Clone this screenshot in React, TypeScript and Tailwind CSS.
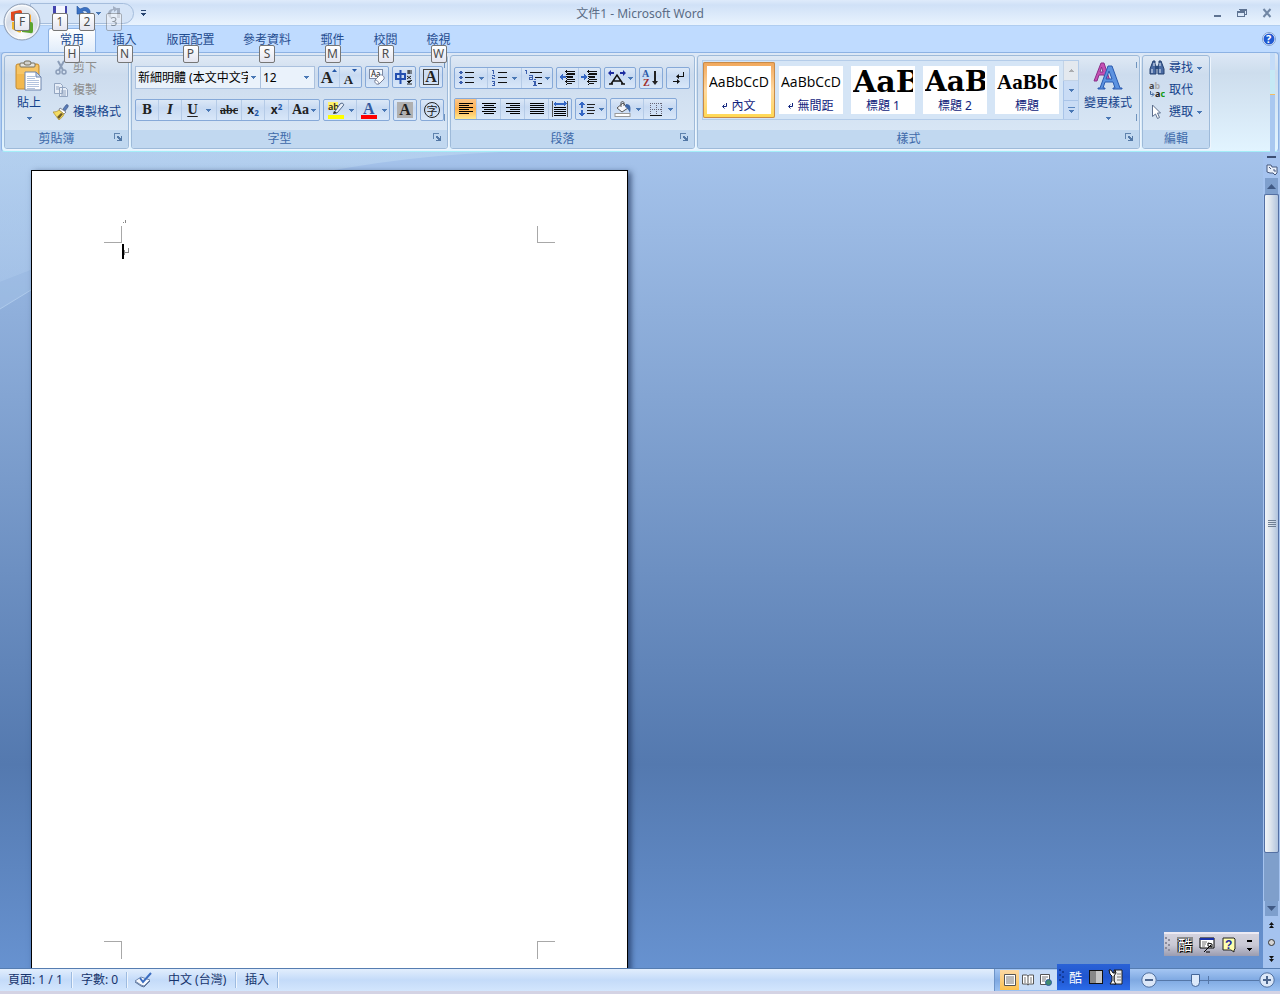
import { useState } from 'react'
import type { ReactNode } from 'react'
import clsx from 'clsx'

const tabs = [
  { label: '常用', tip: 'H', width: 'w-[48px]' },
  { label: '插入', tip: 'N', width: 'w-[57px]' },
  { label: '版面配置', tip: 'P', width: 'w-[75px]' },
  { label: '參考資料', tip: 'S', width: 'w-[78px]' },
  { label: '郵件', tip: 'M', width: 'w-[53px]' },
  { label: '校閱', tip: 'R', width: 'w-[53px]' },
  { label: '檢視', tip: 'W', width: 'w-[53px]' },
]

const styleItems = [
  { name: '內文', mark: true, sample: 'AaBbCcD', font: 'font-["Open_Sans"] text-[14px]' },
  { name: '無間距', mark: true, sample: 'AaBbCcD', font: 'font-["Open_Sans"] text-[14px]' },
  { name: '標題 1', mark: false, sample: 'AaB', font: 'font-["DejaVu_Serif"] text-[30px] font-bold' },
  { name: '標題 2', mark: false, sample: 'AaB', font: 'font-["DejaVu_Serif"] text-[28px] font-bold' },
  { name: '標題', mark: false, sample: 'AaBbC', font: 'font-["Liberation_Serif"] text-[21px] font-bold' },
]

function Arrow({ className }: { className?: string }) {
  return (
    <svg className={clsx('h-[3px] w-[5px] shrink-0', className)} viewBox="0 0 5 3" shapeRendering="crispEdges">
      <path d="M0 0h5v1H4v1H3v1H2V2H1V1H0z" fill="#4a78b5" />
    </svg>
  )
}

function KeyTip({ children, faded, className }: { children: ReactNode; faded?: boolean; className?: string }) {
  return (
    <kbd
      className={clsx(
        'absolute z-20 flex h-[18px] w-4 items-center justify-center rounded-xs border border-[#767676] bg-linear-to-b from-white to-[#e4e5f0] font-["Noto_Sans"] text-xs leading-none text-[#4c4c4c]',
        faded && 'opacity-50',
        className,
      )}
    >
      {children}
    </kbd>
  )
}

function Group({ title, launcher = true, className, children }: { title: string; launcher?: boolean; className?: string; children: ReactNode }) {
  return (
    <section
      className={clsx(
        'relative flex h-[94px] shrink-0 flex-col rounded-[3px] border border-[#9ebad9] bg-linear-to-b from-[#dfe9f5] via-[#cddcee] via-20% to-[#dbe9f7] shadow-[1px_1px_0_#eef5fd]',
        className,
      )}
    >
      <div className="flex-1">{children}</div>
      <div className={clsx('relative flex h-[18px] items-center justify-center rounded-b-[2px] bg-[#c1d8f0]', launcher && 'pr-5')}>
        <h2 className="text-xs leading-none text-[#3e6aaa]">{title}</h2>
        {launcher && (
          <button aria-label={`${title}選項`} className="absolute right-[6px] top-[3px] h-2 w-2">
            <svg viewBox="0 0 8 8" className="h-2 w-2" shapeRendering="crispEdges">
              <path d="M0 0h6v1H1v5H0z" fill="#5f83ae" />
              <path d="M3 3h2v1h1v1h1V3h1v5H3V7h2V6H4V5H3z" fill="#5378a6" />
            </svg>
          </button>
        )}
      </div>
    </section>
  )
}

function EdgeMarks() {
  return (
    <>
      <span className="absolute right-[2px] top-[6px] h-[6px] w-px bg-[#6f93bd]" />
      <span className="absolute right-[2px] top-[58px] h-[7px] w-px bg-[#6f93bd]" />
    </>
  )
}

function Cluster({ children }: { children: ReactNode }) {
  return (
    <div className="flex h-[22px] divide-x divide-[#b5cbe7] rounded-xs border border-[#86a9d8] bg-linear-to-b from-[#dce8f7] via-[#c8daf2] via-40% to-[#d8e7f9]">
      {children}
    </div>
  )
}

function Tool({ label, arrow, active, className, children }: { label: string; arrow?: boolean; active?: boolean; className: string; children: ReactNode }) {
  return (
    <button
      aria-label={label}
      className={clsx(
        'flex h-5 items-center justify-center gap-1 leading-none text-[#222] [&_svg]:shrink-0',
        active && 'bg-linear-to-b from-[#fbc485] via-[#fdb14f] to-[#ffe98f]',
        className,
      )}
    >
      {children}
      {arrow && <Arrow />}
    </button>
  )
}

function Lines({ rows }: { rows: [number, number][] }) {
  return (
    <svg className="h-3 w-4 shrink-0" viewBox="0 0 16 12" shapeRendering="crispEdges">
      {rows.map(([x, w], i) => (
        <rect key={i} x={x} y={i * 2} width={w} height="1" fill="#000" />
      ))}
    </svg>
  )
}

const alignLeft: [number, number][] = [[1, 14], [1, 10], [1, 14], [1, 10], [1, 14], [1, 10]]
const alignCenter: [number, number][] = [[1, 14], [3, 10], [1, 14], [3, 10], [1, 14], [3, 10]]
const alignRight: [number, number][] = [[1, 14], [5, 10], [1, 14], [5, 10], [1, 14], [5, 10]]
const alignFull: [number, number][] = [[1, 14], [1, 14], [1, 14], [1, 14], [1, 14], [1, 14]]

function ListIcon({ numbered }: { numbered?: boolean }) {
  return (
    <svg className="h-4 w-4" viewBox="0 0 16 16" shapeRendering="crispEdges">
      {[2, 7, 12].map((y) => (
        <rect key={y} x="6" y={y} width="9" height="1" fill="#111" />
      ))}
      {numbered ? (
        <path d="M0 0h2v4H1V1H0zM0 5h3v2H1v1h2v1H0V7h2V6H0zM0 11h3v5H0v-1h2v-1H1v-1h1v-1H0z" fill="#3b5fae" />
      ) : (
        <path d="M1 1h2v3H1zM1 6h2v3H1zM1 11h2v3H1zM0 2h4v1H0zM0 7h4v1H0zM0 12h4v1H0z" fill="#3b5fae" />
      )}
    </svg>
  )
}

function MultiListIcon() {
  return (
    <svg className="h-4 w-[18px]" viewBox="0 0 18 16" shapeRendering="crispEdges">
      <path d="M5 2h12v1H5zM10 7h7v1h-7zM13 13h4v1h-4z" fill="#111" />
      <path d="M0 0h2v4H1V1H0zM4 5h4v5H4V7h3V6H4zM9 9h2v1H9zM8 11h3v4h1v1H8v-1h1v-3H8z" fill="#3b5fae" />
      <path d="M5 8h2v1H5z" fill="#d3e1f5" />
    </svg>
  )
}

function IndentIcon({ right }: { right?: boolean }) {
  return (
    <svg className="h-4 w-[18px]" viewBox="0 0 18 16" shapeRendering="crispEdges">
      <path d="M6 1h10v1H6zM8 3h8v2H8zM8 6h6v2H8zM8 9h8v1H8zM6 11h10v1H6zM8 13h5v1H8z" fill="#111" />
      <path d="M7.500 0v16" stroke="#111" strokeDasharray="1 1" />
      {right ? <path d="M0 6h3V4l4 3-4 3V8H0z" fill="#3567c4" /> : <path d="M7 6H4V4L0 7l4 3V8h3z" fill="#3567c4" />}
    </svg>
  )
}

function DistributeIcon() {
  return (
    <svg className="h-4 w-4" viewBox="0 0 16 16" shapeRendering="crispEdges">
      <path d="M0 0h1v16H0zM15 0h1v16h-1z" fill="#555" />
      <path d="M2 6h12v1H2zM2 8h12v1H2zM2 10h12v1H2zM2 12h12v1H2zM2 14h12v1H2z" fill="#000" />
      <path d="M1 3l3-3v2h8V0l3 3-3 2V4H4v1z" fill="#3567c4" />
    </svg>
  )
}

function AsianLayoutIcon() {
  return (
    <svg className="h-4 w-[18px]" viewBox="0 0 18 16">
      <path d="M3 14L9 5l6 9M5 11h8M1 14h4M13 14h4" fill="none" stroke="#111" strokeWidth="1.500" />
      <path d="M0 3l3-3v2h3v2H3v2zM18 3l-3-3v2h-3v2h3v2z" fill="#1d2da0" />
    </svg>
  )
}

function SortIcon() {
  return (
    <svg className="h-[18px] w-[18px]" viewBox="0 0 18 18">
      <text x="0" y="8" fontSize="10" fontWeight="bold" fontFamily="Liberation Serif" fill="#2c5aa8">A</text>
      <text x="1" y="17" fontSize="10" fontWeight="bold" fontFamily="Liberation Serif" fill="#a02c2c">Z</text>
      <path d="M12 2h2v10h2l-3 4-3-4h2z" fill="#222" />
    </svg>
  )
}

function MarksIcon() {
  return (
    <svg className="h-4 w-4" viewBox="0 0 16 16">
      <path d="M13 2v4H9V4L6 6.500 9 9V7h5V2zM3 11h4V9l3 2.500L7 14v-2H3z" fill="#111" />
    </svg>
  )
}

function SpacingIcon() {
  return (
    <svg className="h-4 w-4" viewBox="0 0 16 16" shapeRendering="crispEdges">
      <path d="M3 0l3 4H4v3H2V4H0zM3 16l3-4H4V9H2v3H0z" fill="#3567c4" />
      <path d="M8 3h8v1H8zM8 6h7v1H8zM8 9h8v1H8zM8 12h7v1H8z" fill="#222" />
    </svg>
  )
}

function BucketIcon() {
  return (
    <svg className="h-4 w-[18px]" viewBox="0 0 18 16">
      <rect x="1" y="12.500" width="15" height="3" fill="#fff" stroke="#999" />
      <path d="M3 7l6-5 5 5-6 4z" fill="#f5f7fb" stroke="#555" />
      <path d="M7 6V2c0-2 3-2 3 0v3" fill="none" stroke="#555" />
      <path d="M12 3c5 0 5 4 4 9-1-2-2-5-5-6z" fill="#3f68a8" />
    </svg>
  )
}

function BorderIcon() {
  return (
    <svg className="h-4 w-4" viewBox="0 0 16 16" shapeRendering="crispEdges">
      <path d="M2 2.500h12M2 8.500h12M2.500 2v12M8.500 2v12M13.500 2v12" stroke="#667" strokeDasharray="1 1" />
      <path d="M2 14h12v1H2z" fill="#111" />
    </svg>
  )
}

function EraserIcon() {
  return (
    <svg className="h-[18px] w-[18px]" viewBox="0 0 18 18">
      <rect x="1.500" y="1.500" width="13" height="9" fill="#f8faff" stroke="#7d8ba5" />
      <text x="3" y="9" fontSize="8" fontFamily="Noto Sans" fill="#222">Aa</text>
      <path d="M7 12l5-5c2-1 5 2 4 4l-5 5c-3 1-5-2-4-4z" fill="#fff" stroke="#77809a" />
      <path d="M7 12c2 0 4 2 4 4" fill="none" stroke="#77809a" />
    </svg>
  )
}

function PhoneticIcon() {
  return (
    <svg className="h-[18px] w-[18px]" viewBox="0 0 18 18">
      <path d="M1 6h9v5H1zM5.500 2v14" fill="none" stroke="#234fb0" strokeWidth="2" />
      <path d="M12 3h5M12 5h5M14 2v4M12 8l4 3M16 8l-4 3M12 13l2 2 3-3M12 16h5" stroke="#222" />
    </svg>
  )
}

function HighlightIcon() {
  return (
    <svg className="h-[18px] w-[18px]" viewBox="0 0 18 18">
      <rect x="1" y="1" width="10" height="8" fill="#fff36b" />
      <text x="1" y="9" fontSize="9" fontFamily="Noto Sans" fontWeight="600" fill="#222">ab</text>
      <path d="M7 12l6-9c2-2 5 0 3 2l-6 7z" fill="#e8eef8" stroke="#526a8c" />
      <path d="M6 13l1-3 3 2z" fill="#333" />
      <rect x="1" y="14" width="16" height="4" fill="#ff0" />
    </svg>
  )
}

function FontColorIcon() {
  return (
    <svg className="h-[18px] w-[18px]" viewBox="0 0 18 18">
      <text x="3" y="13" fontSize="16" fontWeight="bold" fontFamily="Liberation Serif" fill="#345a9e">A</text>
      <rect x="1" y="14" width="16" height="4" fill="#f00" />
    </svg>
  )
}

function PasteIcon() {
  return (
    <svg className="h-8 w-7" viewBox="0 0 28 32">
      <rect x="1" y="4" width="23" height="25" rx="2" fill="#f2b84e" stroke="#c58c33" />
      <path d="M2 5h21v9H2z" fill="#f8cd77" opacity=".6" />
      <rect x="5" y="3" width="15" height="4" rx="1" fill="#e4e4e0" stroke="#77705d" />
      <rect x="9" y="1" width="7" height="4" rx="2" fill="#d0d0cc" stroke="#77705d" />
      <path d="M10 12h11l5 5v13H10z" fill="#fff" stroke="#6f86ad" />
      <path d="M21 12v5h5z" fill="#cfdcf0" stroke="#6f86ad" />
      <path d="M12 16h8M12 18h8M12 20h12M12 22h12M12 24h12M12 26h12M12 28h8" stroke="#b3c4de" shapeRendering="crispEdges" />
    </svg>
  )
}

function ScissorsIcon() {
  return (
    <svg className="h-4 w-4" viewBox="0 0 16 16" fill="none" stroke="#8b9db8" strokeWidth="2">
      <path d="M5 1l5 9M11 1L6 10" />
      <circle cx="5" cy="12" r="2" strokeWidth="1.500" />
      <circle cx="11" cy="12" r="2" strokeWidth="1.500" />
    </svg>
  )
}

function CopyIcon() {
  return (
    <svg className="h-4 w-4" viewBox="0 0 16 16" fill="#e6edf7" stroke="#93a5c0">
      <path d="M1.500 1.500h6l2 2v8h-8zM6.500 5.500h6l2 2v7h-8z" />
      <path d="M3 5h3M3 7h3M8 9h5M8 11h5M8 13h5" />
    </svg>
  )
}

function BrushIcon() {
  return (
    <svg className="h-4 w-4" viewBox="0 0 16 16">
      <path d="M10 5l3-4c1-1 3 0 2 2l-3 4z" fill="#587bb8" stroke="#384f7c" strokeWidth=".6" />
      <path d="M7 4l6 4-2 2-5-4z" fill="#fff" stroke="#6b7080" strokeWidth=".8" />
      <path d="M6 6l5 4c-1 3-3 4-5 6L0 8c3 0 5-1 6-2z" fill="#f4dc62" stroke="#ab8b2a" strokeWidth=".7" />
      <path d="M4 13l4-4 2 1-4 5z" fill="#6b5a2a" />
    </svg>
  )
}

function FindIcon() {
  return (
    <svg className="h-4 w-4" viewBox="0 0 16 16">
      <path d="M4 1h2v3l1 2v8H1V9zM10 1h2l3 8v5H9V6l1-2z" fill="#4a6ba3" stroke="#24406f" />
      <path d="M3 9v4M11 9v4M5 3v3M11 3v3" stroke="#e8f0fc" />
      <path d="M6 6h4v3H6z" fill="#294a7e" />
    </svg>
  )
}

function ReplaceIcon() {
  return (
    <svg className="h-4 w-4" viewBox="0 0 16 16" fontFamily="Noto Sans" fontWeight="bold">
      <text x="0" y="7" fontSize="9" fill="#444">a<tspan fill="#aaa">b</tspan></text>
      <text x="6" y="15" fontSize="9" fill="#222">a<tspan fill="#169a16">c</tspan></text>
      <path d="M1.500 9v3.500h3M3 10.500l2 2-2 2" fill="none" stroke="#446aa0" />
    </svg>
  )
}

function PointerIcon() {
  return (
    <svg className="h-4 w-4" viewBox="0 0 16 16">
      <path d="M3.500 1l8 8H8.500l2 4.500-2 1L6.500 10 3.500 12.500z" fill="#fff" stroke="#5d6f8d" />
    </svg>
  )
}

function ChangeStylesIcon() {
  return (
    <svg className="h-7 w-8" viewBox="0 0 32 28">
      <path d="M2 19L9 1h3l6 18h-4l-2-6H7l-2 6zM8 10h3l-1.500-5z" fill="#c450b4" stroke="#8a3087" />
      <path d="M8 26l8-22h4l8 22h2v1h-9v-1h2l-2-6h-8l-2 6h2v1H6v-1zM14 17h6l-3-8z" fill="#5c92e0" stroke="#2a5bb0" />
    </svg>
  )
}

function OfficeLogo() {
  return (
    <svg className="h-[38px] w-[38px]" viewBox="0 0 38 38">
      <defs>
        <radialGradient id="orb" cx=".5" cy=".85" r=".9">
          <stop offset="0" stopColor="#fff" />
          <stop offset=".55" stopColor="#d4dbe6" />
          <stop offset="1" stopColor="#f7f9fc" />
        </radialGradient>
      </defs>
      <circle cx="19" cy="19" r="18" fill="url(#orb)" stroke="#8c9cb3" />
      <circle cx="19" cy="19" r="16.500" fill="none" stroke="#fff" opacity=".8" />
      <path d="M8 9l9-2q2 0 2 2v9H10q-2 0-2-2z" fill="#e2481e" />
      <path d="M19 12l7-1q2 0 2 2v6h-9z" fill="#f5a52a" />
      <path d="M9 19h9v10q-1 1-3 0l-6-3z" fill="#f0b52c" />
      <path d="M19 19h9q2 0 2 2v7q0 3-3 2l-8-1z" fill="#5ba42f" />
      <path d="M12 12h4v4h-4z" fill="#fff" opacity=".8" />
    </svg>
  )
}

function TitleBar() {
  return (
    <header className="relative flex h-[26px] shrink-0 items-center justify-center border-b border-[#b0cdf0] bg-linear-to-b from-[#dfebfb] via-[#d0e1f7] via-20% to-[#e9f3fe]">
      <div className="absolute left-[30px] top-[3px] flex h-[21px] w-[104px] items-start gap-2 rounded-r-full border border-[#a5bddc] bg-[#d5e4f7] pl-[21px] pt-px">
        <button aria-label="儲存檔案">
          <svg className="h-4 w-4" viewBox="0 0 16 16">
            <path d="M1 1h14v14H1z" fill="#4344ae" />
            <path d="M4 1h9v8H4z" fill="#f4f6ff" />
            <path d="M4 11h8v4H4z" fill="#c9cdef" />
          </svg>
        </button>
        <button aria-label="復原" className="flex items-center gap-1">
          <svg className="h-4 w-4" viewBox="0 0 16 16">
            <path d="M1 1v8h8L6 6.500c3-2 6 0 6 4l-1 3c5-4 4-12-3-11L4 4z" fill="#3b72c4" stroke="#24509a" strokeWidth=".6" />
          </svg>
          <Arrow />
        </button>
        <button aria-label="取消復原" className="-ml-1">
          <svg className="h-4 w-4" viewBox="0 0 16 16">
            <path d="M8 1l5 3-4 3V5C6 5 5 9 7 14 1 12 2 4 8 4zM12 3h3v10h-3z" fill="#a3b0c4" />
          </svg>
        </button>
      </div>
      <button aria-label="自訂快速存取工具列" className="absolute left-[141px] top-[10px]">
        <svg className="block h-[6px] w-[5px]" viewBox="0 0 5 6" shapeRendering="crispEdges">
          <path d="M0 0h5v1H0zM0 3h5v1H4v1H3v1H2V5H1V4H0z" fill="#27446f" />
        </svg>
      </button>
      <KeyTip className="left-[52px] top-[13px]">1</KeyTip>
      <KeyTip className="left-[79px] top-[13px]">2</KeyTip>
      <KeyTip faded className="left-[106px] top-[13px]">3</KeyTip>
      <h1 className="pt-[3px] text-xs leading-none text-[#5a6c85]">文件1 - Microsoft Word</h1>
      <div className="absolute right-2 top-2 flex items-center gap-[15px]">
        <button aria-label="最小化">
          <svg className="block h-[10px] w-[10px]" viewBox="0 0 10 10" shapeRendering="crispEdges"><path d="M2 7h7v2H2z" fill="#5e7392" /></svg>
        </button>
        <button aria-label="還原">
          <svg className="block h-[10px] w-[10px]" viewBox="0 0 10 10" shapeRendering="crispEdges">
            <path d="M2 1h8v6H8V6h1V3H3V2H2zM0 3h8v6H0zM1 5v3h6V5z" fill="#5e7392" fillRule="evenodd" />
          </svg>
        </button>
        <button aria-label="關閉">
          <svg className="block h-[10px] w-[10px]" viewBox="0 0 10 10"><path d="M1.500 1l7 8M8.500 1l-7 8" stroke="#7187a5" strokeWidth="2" /></svg>
        </button>
      </div>
    </header>
  )
}

function TabStrip() {
  const [active, setActive] = useState('常用')
  return (
    <nav className="flex h-[26px] shrink-0 items-end justify-between bg-[#bfdbff] pl-12 pr-1">
      <div className="flex">
        {tabs.map((tab) => (
          <button
            key={tab.label}
            onClick={() => setActive(tab.label)}
            className={clsx(
              'relative flex h-6 justify-center whitespace-nowrap rounded-t-[3px] border border-b-0 pt-[5px] text-xs leading-none text-[#1f4c8f]',
              tab.width,
              active === tab.label ? 'border-[#8db2e3] bg-linear-to-b from-white to-[#e0ecfa]' : 'border-transparent',
            )}
          >
            <span>{tab.label}</span>
            <KeyTip className="left-1/2 top-4 -translate-x-1/2">{tab.tip}</KeyTip>
          </button>
        ))}
      </div>
      <button aria-label="說明" className="mb-[6px]">
        <svg className="block h-[14px] w-[14px]" viewBox="0 0 14 14">
          <circle cx="7" cy="7" r="6.500" fill="#fff" stroke="#7f9fcf" />
          <circle cx="7" cy="7" r="5.500" fill="#2059d2" />
          <text x="4" y="11" fontSize="11" fontWeight="bold" fontFamily="Noto Sans" fill="#fff">?</text>
        </svg>
      </button>
    </nav>
  )
}

function ClipboardGroup() {
  return (
    <Group title="剪貼簿" className="w-[125px]">
      <div className="flex gap-1 pl-2">
        <button className="flex w-8 flex-col items-center pt-1 text-xs leading-none text-[#15428b]">
          <PasteIcon />
          <span className="mt-[5px]">貼上</span>
          <Arrow className="mt-2" />
        </button>
        <div className="flex flex-col pl-1 pt-px">
          <button disabled className="flex h-[22px] items-center gap-1 text-xs leading-none text-[#8d8d8d]"><ScissorsIcon />剪下</button>
          <button disabled className="flex h-[22px] items-center gap-1 text-xs leading-none text-[#8d8d8d]"><CopyIcon />複製</button>
          <button className="flex h-[22px] items-center gap-1 whitespace-nowrap text-xs leading-none text-[#15428b]"><BrushIcon />複製格式</button>
        </div>
      </div>
    </Group>
  )
}

function FontGroup() {
  return (
    <Group title="字型" className="w-[317px]">
      <EdgeMarks />
      <div className="flex flex-col gap-[10px] pl-[3px] pt-[10px]">
        <div className="flex gap-[3px]">
          <div className="flex h-[23px]">
            <label className="relative flex w-[126px] items-center border border-[#abc1de] bg-[#eaf2fb]">
              <span className="sr-only">字型</span>
              <select className="h-full w-[112px] appearance-none overflow-hidden pl-[2px] text-xs text-black">
                <option>新細明體 (本文中文字型)</option>
              </select>
              <Arrow className="absolute right-1" />
            </label>
            <label className="relative -ml-px flex w-[55px] items-center border border-[#abc1de] bg-[#eaf2fb]">
              <span className="sr-only">字型大小</span>
              <select className="h-full w-[40px] appearance-none pl-[2px] text-xs text-black">
                <option>12</option>
              </select>
              <Arrow className="absolute right-[5px]" />
            </label>
          </div>
          <Cluster>
            <Tool label="放大字型" className='w-[21px] pr-1 font-["Liberation_Serif"] text-[17px] font-bold'>
              <span className="relative">A<svg className="absolute -right-1 top-0 h-[3px] w-[5px]" viewBox="0 0 5 3"><path d="M0 3l2.500-3L5 3z" fill="#2457a8" /></svg></span>
            </Tool>
            <Tool label="縮小字型" className='w-[21px] pr-1 pt-1 font-["Liberation_Serif"] text-[13px] font-bold'>
              <span className="relative">A<svg className="absolute -right-1 -top-1 h-[3px] w-[5px]" viewBox="0 0 5 3"><path d="M0 0h5L2.500 3z" fill="#2457a8" /></svg></span>
            </Tool>
          </Cluster>
          <Cluster><Tool label="清除格式設定" className="w-[22px]"><EraserIcon /></Tool></Cluster>
          <Cluster><Tool label="注音標示" className="w-[22px]"><PhoneticIcon /></Tool></Cluster>
          <Cluster>
            <Tool label="字元框線" className="w-[22px]">
              <span className='flex h-4 w-4 items-center justify-center border border-[#444] font-["Liberation_Serif"] text-base font-bold leading-none'>A</span>
            </Tool>
          </Cluster>
        </div>
        <div className="flex gap-[3px]">
          <Cluster>
            <Tool label="粗體" className='w-[23px] font-["DejaVu_Serif"] text-xs font-bold'>B</Tool>
            <Tool label="斜體" className='w-[23px] font-["DejaVu_Serif"] text-xs italic'><b>I</b></Tool>
            <Tool label="底線" arrow className='w-[35px] gap-2 font-["DejaVu_Serif"] text-xs font-bold'><span className="underline underline-offset-2">U</span></Tool>
            <Tool label="刪除線" className='w-[25px] font-["Liberation_Serif"] text-xs font-bold'><span className="line-through">abc</span></Tool>
            <Tool label="下標" className="w-[23px] text-xs font-bold"><span>x<sub className="text-[8px] text-[#2457a8]">2</sub></span></Tool>
            <Tool label="上標" className="w-[24px] text-xs font-bold"><span>x<sup className="text-[8px] text-[#2457a8]">2</sup></span></Tool>
            <Tool label="大小寫轉換" arrow className='w-[30px] gap-[2px] font-["Liberation_Serif"] text-sm font-bold'>Aa</Tool>
          </Cluster>
          <Cluster>
            <Tool label="文字醒目提示色彩" arrow className="w-[33px]"><HighlightIcon /></Tool>
            <Tool label="字型色彩" arrow className="w-[32px]"><FontColorIcon /></Tool>
          </Cluster>
          <Cluster>
            <Tool label="字元網底" className="w-[22px]">
              <span className='flex h-4 w-4 items-center justify-center bg-[#b0b0b0] font-["Liberation_Serif"] text-base font-bold leading-none'>A</span>
            </Tool>
          </Cluster>
          <Cluster>
            <Tool label="圍繞字元" className="w-[22px]">
              <span className="flex h-4 w-4 items-center justify-center rounded-full border border-[#222] text-[11px] leading-none">字</span>
            </Tool>
          </Cluster>
        </div>
      </div>
    </Group>
  )
}

function ParagraphGroup() {
  return (
    <Group title="段落" className="w-[245px]">
      <div className="flex flex-col gap-[9px] pl-[3px] pt-[11px]">
        <div className="flex gap-[3px]">
          <Cluster>
            <Tool label="項目符號" arrow className="w-[33px]"><ListIcon /></Tool>
            <Tool label="編號" arrow className="w-[34px]"><ListIcon numbered /></Tool>
            <Tool label="多層次清單" arrow className="w-[30px] gap-[2px]"><MultiListIcon /></Tool>
          </Cluster>
          <Cluster>
            <Tool label="減少縮排" className="w-[22px]"><IndentIcon /></Tool>
            <Tool label="增加縮排" className="w-[21px]"><IndentIcon right /></Tool>
          </Cluster>
          <Cluster><Tool label="亞洲方式配置" arrow className="w-[30px] gap-[2px]"><AsianLayoutIcon /></Tool></Cluster>
          <Cluster><Tool label="排序" className="w-[22px]"><SortIcon /></Tool></Cluster>
          <Cluster><Tool label="顯示編輯標記" className="w-[22px]"><MarksIcon /></Tool></Cluster>
        </div>
        <div className="flex gap-[3px]">
          <Cluster>
            <Tool label="靠左對齊" active className="w-[22px]"><Lines rows={alignLeft} /></Tool>
            <Tool label="置中" className="w-6"><Lines rows={alignCenter} /></Tool>
            <Tool label="靠右對齊" className="w-6"><Lines rows={alignRight} /></Tool>
            <Tool label="左右對齊" className="w-6"><Lines rows={alignFull} /></Tool>
            <Tool label="分散對齊" className="w-[22px]"><DistributeIcon /></Tool>
          </Cluster>
          <Cluster><Tool label="行距" arrow className="w-[30px]"><SpacingIcon /></Tool></Cluster>
          <Cluster>
            <Tool label="網底" arrow className="w-[33px]"><BucketIcon /></Tool>
            <Tool label="框線" arrow className="w-8"><BorderIcon /></Tool>
          </Cluster>
        </div>
      </div>
    </Group>
  )
}

function StylesGroup() {
  const [selected, setSelected] = useState('內文')
  return (
    <Group title="樣式" className="w-[443px]">
      <EdgeMarks />
      <div className="flex gap-1 pl-1 pt-1">
        <div className="flex h-[60px] border border-[#b4cce9] bg-[#d5e5f6]">
          {styleItems.map((item) => (
            <button
              key={item.name}
              onClick={() => setSelected(item.name)}
              className={clsx(
                'mt-px h-14 w-[72px] rounded-xs p-1',
                selected === item.name && 'bg-linear-to-b from-[#f0a65a] via-[#ffd9a0] to-[#ffd94f] shadow-[inset_0_0_0_1px_#c88b4a]',
              )}
            >
              <span className="flex h-12 w-16 flex-col items-center overflow-hidden bg-white px-[2px]">
                <span className={clsx('flex h-8 w-full items-center overflow-hidden leading-none text-black', item.font)}>{item.sample}</span>
                <span className="mt-[2px] flex items-center gap-1 text-xs leading-none text-[#10237c]">
                  {item.mark && (
                    <svg className="h-[6px] w-[5px]" viewBox="0 0 5 6"><path d="M4.500 0v3.500H1M2.500 1.500L.5 3.500l2 2" fill="none" stroke="#10237c" /></svg>
                  )}
                  {item.name}
                </span>
              </span>
            </button>
          ))}
          <div className="flex w-[15px] flex-col">
            <button aria-label="上一列" className="flex h-5 items-center justify-center border-b border-l border-[#c3d3e6] bg-[#e4e9ef]">
              <Arrow className="rotate-180 opacity-50 grayscale" />
            </button>
            <button aria-label="下一列" className="flex h-5 items-center justify-center border-b border-l border-[#a9c4e8] bg-[#c9dcf5]"><Arrow /></button>
            <button aria-label="其他" className="flex flex-1 flex-col items-center justify-center gap-[2px] border-l border-[#a9c4e8] bg-[#c9dcf5]">
              <span className="h-px w-[7px] bg-[#5a87c0]" />
              <Arrow />
            </button>
          </div>
        </div>
        <button className="flex w-[50px] flex-col items-center whitespace-nowrap pt-[2px] text-xs leading-none text-[#15428b]">
          <ChangeStylesIcon />
          <span className="mt-[7px]">變更樣式</span>
          <Arrow className="mt-2" />
        </button>
      </div>
    </Group>
  )
}

function EditingGroup() {
  return (
    <Group title="編輯" launcher={false} className="w-[68px]">
      <div className="flex flex-col pl-[6px] pt-px text-xs leading-none text-[#15428b]">
        <button className="flex h-[22px] items-center gap-1"><FindIcon />尋找<Arrow /></button>
        <button className="flex h-[22px] items-center gap-1"><ReplaceIcon />取代</button>
        <button className="flex h-[22px] items-center gap-1"><PointerIcon />選取<Arrow /></button>
      </div>
    </Group>
  )
}

function Ribbon() {
  return (
    <div className="relative mx-px flex h-[100px] shrink-0 gap-[2px] rounded-[4px] border border-[#8db2e3] border-b-[#a4eef8] bg-linear-to-b from-[#dde8f6] via-[#cddded] via-20% to-[#e2f4ff] pl-[2px] pt-[2px]">
      <ClipboardGroup />
      <FontGroup />
      <ParagraphGroup />
      <StylesGroup />
      <EditingGroup />
      <div className="absolute -bottom-1 right-[3px] top-0 flex w-[5px] flex-col">
        <span className="h-[17px] bg-[#c4dcf8]" />
        <span className="h-6 bg-[#c5e9f5]" />
        <span className="h-px bg-[#f3bd62]" />
        <span className="flex-1 bg-[#a9c8f0]" />
      </div>
    </div>
  )
}

function Corner({ className }: { className: string }) {
  return <span className={clsx('absolute w-[18px] border-[#a8a8a8]', className)} />
}

function DocumentArea() {
  return (
    <main className="relative flex-1 overflow-hidden bg-linear-to-b from-[#a5c3eb] via-[#5479af] via-75% to-[#6792d0] pl-[31px] pt-[18px]">
      <svg className="absolute left-0 top-0 h-[160px] w-[520px]" viewBox="0 0 520 160">
        <defs>
          <linearGradient id="gloss" x1="0" y1="0" x2="0" y2="1">
            <stop offset="0" stopColor="#c2dcf3" stopOpacity=".5" />
            <stop offset="1" stopColor="#b4d0f0" stopOpacity=".5" />
          </linearGradient>
        </defs>
        <path d="M0 0h500Q250 10 31 118L0 130z" fill="url(#gloss)" />
        <path d="M0 130L31 118v20L0 157z" fill="#a9c8ea" opacity=".4" />
        <path d="M0 157l31-19" stroke="#b9d3f0" opacity=".7" />
      </svg>
      <article className="relative h-[1123px] w-[597px] border border-black bg-white shadow-[3px_2px_6px_rgba(20,40,80,0.7)]">
        <Corner className="left-[72px] top-[55px] h-[17px] border-b border-r" />
        <Corner className="right-[72px] top-[55px] h-[17px] border-b border-l" />
        <Corner className="left-[72px] top-[770px] h-[18px] border-r border-t" />
        <Corner className="right-[72px] top-[770px] h-[18px] border-l border-t" />
        <svg className="absolute left-[90px] top-[49px] h-10 w-2" viewBox="0 0 8 40" shapeRendering="crispEdges">
          <path d="M1 2h1v1H1zM3 0h1v3H3z" fill="#888" />
          <path d="M0 24h2v15H0z" fill="#000" />
          <path d="M6 28h1v5H2v-1h4zM2 30h1v5H2z" fill="#888" />
        </svg>
      </article>
    </main>
  )
}

function Scrollbar() {
  return (
    <aside className="flex w-[17px] shrink-0 flex-col items-center bg-[#a5c3ef]">
      <button aria-label="分割" className="mt-1 h-[2px] w-[9px] bg-[#3d4f73]" />
      <button aria-label="尺規" className="mt-1 flex h-4 items-center">
        <svg className="h-3 w-3" viewBox="0 0 12 12"><path d="M1 1h4l1 2h5v6l-2 2-2-2H4L1 8z" fill="#e8effa" stroke="#46587c" /><path d="M3 3l2 2M7 6h2v2" fill="none" stroke="#46587c" /></svg>
      </button>
      <button aria-label="向上捲動" className="flex h-4 w-[13px] items-center justify-center bg-[#7e9fcd]">
        <svg className="h-[5px] w-[9px]" viewBox="0 0 9 5"><path d="M0 5l4.500-5L9 5z" fill="#405a85" /></svg>
      </button>
      <div className="flex w-[15px] flex-1 flex-col bg-[#7f9fcb]">
        <div className="flex flex-[658] flex-col items-center justify-center gap-px rounded-xs border border-[#5470a3] bg-linear-to-r from-[#f0f4f8] via-[#dbe3ec] via-45% to-[#b0c3dd]">
          {[0, 1, 2, 3].map((n) => (
            <span key={n} className="h-px w-2 bg-[#6f7f94]" />
          ))}
        </div>
        <div className="flex-[48]" />
      </div>
      <button aria-label="向下捲動" className="flex h-[15px] w-[13px] items-center justify-center bg-[#7e9fcd]">
        <svg className="h-[5px] w-[9px]" viewBox="0 0 9 5"><path d="M0 0h9L4.500 5z" fill="#405a85" /></svg>
      </button>
      <div className="flex h-[52px] flex-col items-center justify-between py-[6px]">
        <button aria-label="上一頁"><svg className="block h-[7px] w-[5px]" viewBox="0 0 5 7"><path d="M2.500 0L5 3H0zM2.500 3L5 6H0z" fill="#111" /></svg></button>
        <button aria-label="選取瀏覽物件" className="h-[7px] w-[7px] rounded-full border border-[#333] bg-[#d4d4d4]" />
        <button aria-label="下一頁"><svg className="block h-[7px] w-[5px]" viewBox="0 0 5 7"><path d="M0 1h5L2.500 4zM0 4h5L2.500 7z" fill="#111" /></svg></button>
      </div>
    </aside>
  )
}

function Grip({ color }: { color: string }) {
  return (
    <svg className="h-4 w-[6px]" viewBox="0 0 6 16" shapeRendering="crispEdges">
      <path d="M0 0h2v2H0zM3 2h2v2H3zM0 5h2v2H0zM3 7h2v2H3zM0 10h2v2H0zM3 12h2v2H3z" fill={color} />
    </svg>
  )
}

function InputMethodBar() {
  return (
    <div className="absolute bottom-[38px] right-[21px] z-10 flex h-6 w-[95px] items-center gap-[6px] border-t-2 border-t-[#eceaf3] bg-linear-to-b from-[#d3d2de] via-[#c9c9d5] to-[#9b9cb0] pl-px">
      <Grip color="#8b8c9c" />
      <button className="flex h-4 w-4 items-center justify-center bg-[#8b8b8b] text-sm leading-none text-white [text-shadow:1px_1px_0_#000,-1px_0_0_#000]">酷</button>
      <button aria-label="手寫">
        <svg className="h-4 w-4" viewBox="0 0 16 16">
          <path d="M1 1h14v10H1z" fill="#fff" stroke="#000" />
          <path d="M1 1h14v2H1z" fill="#1931a8" />
          <path d="M3 5h5M3 7h4M3 9h3" stroke="#777" />
          <path d="M5 15l7-7M9 6l4 1v3l-4-1zM7 15h4" stroke="#000" fill="#fff" />
        </svg>
      </button>
      <button aria-label="說明">
        <svg className="h-4 w-4" viewBox="0 0 16 16">
          <path d="M2 1h11l1 1v10l-1 1v2l-3-2H2z" fill="#ffffae" stroke="#222" />
          <text x="4" y="12" fontSize="12" fontWeight="bold" fontFamily="Liberation Sans" fill="#1b2a9e">?</text>
        </svg>
      </button>
      <button aria-label="選項" className="ml-1">
        <svg className="h-3 w-[5px]" viewBox="0 0 5 12" shapeRendering="crispEdges"><path d="M0 1h5v2H0zM0 9h5v1H4v1H3v1H2v-1H1v-1H0z" fill="#000" /></svg>
      </button>
    </div>
  )
}

function LanguageBar() {
  return (
    <div className="absolute bottom-1 right-[150px] z-10 flex h-[26px] w-[73px] items-center gap-1 bg-linear-to-b from-[#2a62d6] via-[#1f55cf] to-[#2b6be8] pl-[2px]">
      <Grip color="#123a98" />
      <button className="text-[13px] leading-none text-white">酷</button>
      <button aria-label="半形" className="ml-[2px]">
        <svg className="h-4 w-4" viewBox="0 0 16 16">
          <rect x="1.500" y="1.500" width="13" height="13" fill="#c6c6c6" stroke="#111" />
          <path d="M2 2h6v12H2z" fill="#888" />
        </svg>
      </button>
      <button aria-label="工具">
        <svg className="h-4 w-4" viewBox="0 0 16 16">
          <path d="M6 1h8v14H6z" fill="#eee" stroke="#222" />
          <path d="M9 5h4M9 8h4M9 11h4" stroke="#777" />
          <path d="M1 1l1 4 2 2v5l-2 3h6l-2-3V7l2-3-1-3v3H5L3 1z" fill="#fff" stroke="#111" />
        </svg>
      </button>
    </div>
  )
}

function ZoomButton({ plus }: { plus?: boolean }) {
  return (
    <button aria-label={plus ? '放大' : '縮小'}>
      <svg className="block h-4 w-4" viewBox="0 0 16 16">
        <circle cx="8" cy="8" r="7.200" fill="#dbe7f8" stroke="#50709f" />
        <path d={plus ? 'M4 7h3V4h2v3h3v2H9v3H7V9H4z' : 'M4 7h8v2H4z'} fill="#4d668d" />
      </svg>
    </button>
  )
}

function StatusBar() {
  const [zoom, setZoom] = useState(37)
  const cell = 'flex h-4 items-center border-r border-[#9dbbe0] shadow-[1px_0_0_#eef5fe]'
  return (
    <footer className="flex h-[26px] shrink-0 items-stretch border-b-[3px] border-t border-b-[#d4d3e4] border-t-[#567db1] bg-linear-to-b from-[#e2eefd] via-[#c4dbf9] via-50% to-[#d3e6fd] text-xs leading-none text-[#15336b]">
      <div className="flex flex-1 items-center whitespace-nowrap">
        <span className={clsx(cell, 'w-[72px] pl-2')}>頁面: 1 / 1</span>
        <span className={clsx(cell, 'w-[55px] pl-[9px]')}>字數: 0</span>
        <button aria-label="校對" className="ml-[7px]">
          <svg className="block h-4 w-[18px]" viewBox="0 0 18 16">
            <path d="M1 9l6-4 3 1 6 2-6 6-3-1z" fill="#f5f8fd" stroke="#6f87ad" />
            <path d="M1 10l6 4 3 1 6-6" fill="none" stroke="#5c7398" />
            <path d="M6 6l3 4 8-9" fill="none" stroke="#3a6cc0" strokeWidth="2" />
          </svg>
        </button>
        <span className={clsx(cell, 'w-[84px] pl-4')}>中文 (台灣)</span>
        <span className={clsx(cell, 'w-[42px] pl-[9px]')}>插入</span>
      </div>
      <div className="flex w-[286px] items-center border-l border-[#6d94c8] bg-linear-to-b from-[#a5c6f3] via-[#7fa9e2] via-50% to-[#9cc2f2] pl-[5px] pr-[5px]">
        <div className="flex h-5 w-[58px] items-center bg-[#c7dcf7]">
          <button aria-label="整頁模式" className="flex h-5 w-[19px] items-center justify-center bg-linear-to-b from-[#fbd9a5] to-[#fdc24c]">
            <svg className="h-3 w-3" viewBox="0 0 12 12"><path d="M.5 .5h11v11H.5z" fill="#fff" stroke="#555" /><path d="M2 3h8M2 5h8M2 7h8M2 9h8" stroke="#777" /></svg>
          </button>
          <button aria-label="閱讀版面配置" className="flex w-[18px] justify-center">
            <svg className="h-3 w-3" viewBox="0 0 12 12"><path d="M.5 1h4L6 2l1.500-1h4v9h-4L6 11l-1.500-1h-4zM6 2v9" fill="#fff" stroke="#555" /><path d="M2 4h2M2 6h2M2 8h2M8 4h2M8 6h2M8 8h2" stroke="#777" /></svg>
          </button>
          <button aria-label="Web 版面配置" className="flex w-[18px] justify-center">
            <svg className="h-3 w-3" viewBox="0 0 12 12"><path d="M.5 .5h9v10h-9z" fill="#fff" stroke="#555" /><path d="M2 3h6M2 5h4M2 7h3" stroke="#777" /><circle cx="8.500" cy="8.500" r="3" fill="#3f8b6e" stroke="#2c5a9e" /></svg>
          </button>
        </div>
        <div className="ml-auto flex w-[134px] items-center">
          <ZoomButton />
          <div className="relative flex flex-1 items-center">
            <span className="absolute inset-x-0 h-px bg-[#5577a8]" />
            <span className="absolute left-1/2 h-2 w-px bg-[#5577a8]" />
            <input
              type="range"
              aria-label="顯示比例"
              value={zoom}
              onChange={(e) => setZoom(Number(e.target.value))}
              className="relative h-4 w-full appearance-none bg-transparent [&::-webkit-slider-thumb]:h-[13px] [&::-webkit-slider-thumb]:w-[9px] [&::-webkit-slider-thumb]:appearance-none [&::-webkit-slider-thumb]:rounded-b-full [&::-webkit-slider-thumb]:border [&::-webkit-slider-thumb]:border-[#446698] [&::-webkit-slider-thumb]:bg-[#dce9fa]"
            />
          </div>
          <ZoomButton plus />
        </div>
      </div>
    </footer>
  )
}

export default function App() {
  return (
    <div className='relative flex h-screen flex-col overflow-hidden bg-[#b1cdf3] font-["Noto_Sans","Noto_Sans_CJK_TC",sans-serif]'>
      <TitleBar />
      <TabStrip />
      <Ribbon />
      <div className="flex min-h-0 flex-1">
        <DocumentArea />
        <Scrollbar />
      </div>
      <StatusBar />
      <button aria-label="Office 按鈕" className="absolute left-[3px] top-[3px] z-10">
        <OfficeLogo />
        <KeyTip className="left-[11px] top-[10px]">F</KeyTip>
      </button>
      <InputMethodBar />
      <LanguageBar />
    </div>
  )
}
